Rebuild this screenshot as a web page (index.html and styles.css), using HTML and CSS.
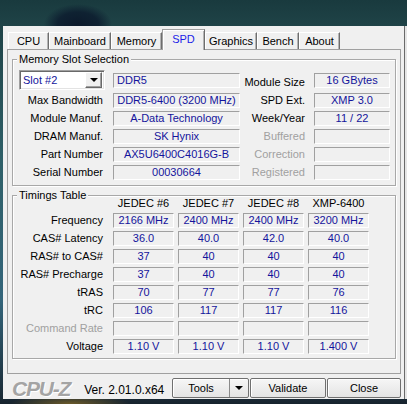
FILE: index.html
```html
<!DOCTYPE html>
<html>
<head>
<meta charset="utf-8">
<title>CPU-Z SPD</title>
<link rel="stylesheet" href="styles.css">
</head>
<body>
<div class="win">
  <div class="tabs">
    <div class="tab t-cpu">CPU</div>
    <div class="tab t-main">Mainboard</div>
    <div class="tab t-mem">Memory</div>
    <div class="tab t-spd sel">SPD</div>
    <div class="tab t-gfx">Graphics</div>
    <div class="tab t-bench">Bench</div>
    <div class="tab t-about">About</div>
  </div>
  <div class="panel">
    <div class="group g1">
      <span class="legend">Memory Slot Selection</span>
      <div class="grid1">
        <div class="combo"><span class="combo-val">Slot #2</span><span class="combo-btn"><span class="arrow"></span></span></div>
        <div class="f left mid">DDR5</div>
        <div class="rlab low">Module Size</div>
        <div class="f mid">16 GBytes</div>

        <div class="lab">Max Bandwidth</div>
        <div class="f">DDR5-6400 (3200 MHz)</div>
        <div class="rlab">SPD Ext.</div>
        <div class="f">XMP 3.0</div>

        <div class="lab">Module Manuf.</div>
        <div class="f">A-Data Technology</div>
        <div class="rlab">Week/Year</div>
        <div class="f">11 / 22</div>

        <div class="lab">DRAM Manuf.</div>
        <div class="f">SK Hynix</div>
        <div class="rlab dim">Buffered</div>
        <div class="f"></div>

        <div class="lab">Part Number</div>
        <div class="f">AX5U6400C4016G-B</div>
        <div class="rlab dim">Correction</div>
        <div class="f"></div>

        <div class="lab">Serial Number</div>
        <div class="f">00030664</div>
        <div class="rlab dim">Registered</div>
        <div class="f"></div>
      </div>
    </div>
    <div class="group g2">
      <span class="legend">Timings Table</span>
      <div class="grid2">
        <div></div>
        <div class="hd">JEDEC #6</div>
        <div class="hd">JEDEC #7</div>
        <div class="hd">JEDEC #8</div>
        <div class="hd">XMP-6400</div>

        <div class="lab2">Frequency</div>
        <div class="f">2166 MHz</div>
        <div class="f">2400 MHz</div>
        <div class="f">2400 MHz</div>
        <div class="f">3200 MHz</div>

        <div class="lab2">CAS# Latency</div>
        <div class="f">36.0</div>
        <div class="f">40.0</div>
        <div class="f">42.0</div>
        <div class="f">40.0</div>

        <div class="lab2">RAS# to CAS#</div>
        <div class="f">37</div>
        <div class="f">40</div>
        <div class="f">40</div>
        <div class="f">40</div>

        <div class="lab2">RAS# Precharge</div>
        <div class="f">37</div>
        <div class="f">40</div>
        <div class="f">40</div>
        <div class="f">40</div>

        <div class="lab2">tRAS</div>
        <div class="f">70</div>
        <div class="f">77</div>
        <div class="f">77</div>
        <div class="f">76</div>

        <div class="lab2">tRC</div>
        <div class="f">106</div>
        <div class="f">117</div>
        <div class="f">117</div>
        <div class="f">116</div>

        <div class="lab2 dim">Command Rate</div>
        <div class="f"></div>
        <div class="f"></div>
        <div class="f"></div>
        <div class="f"></div>

        <div class="lab2">Voltage</div>
        <div class="f">1.10 V</div>
        <div class="f">1.10 V</div>
        <div class="f">1.10 V</div>
        <div class="f">1.400 V</div>
      </div>
    </div>
  </div>
  <div class="foot">
    <div class="logo">CPU-Z</div>
    <div class="ver">Ver. 2.01.0.x64</div>
    <div class="btns">
      <div class="btn b-tools"><span class="btn-main">Tools</span><span class="btn-drop"><span class="arrow"></span></span></div>
      <div class="btn b-val">Validate</div>
      <div class="btn b-close">Close</div>
    </div>
  </div>
</div>
</body>
</html>
```

FILE: styles.css
```css
* { box-sizing: border-box; }

html, body { margin: 0; padding: 0; }

body {
  width: 407px;
  height: 404px;
  overflow: hidden;
  font-family: "Liberation Sans", Arial, sans-serif;
  font-size: 11px;
  color: #000;
  background:
    radial-gradient(ellipse 34px 20px at 78px 24px, #0c1a2c 0%, #0f2232 60%, rgba(15,34,50,0) 100%),
    radial-gradient(ellipse 60px 10px at 70px 404px, #6b5a2a 0%, rgba(107,90,42,0) 100%),
    linear-gradient(to bottom, #193a3e 0px, #1f4347 26px, #2f6068 160px, #34657a 300px, #1a2a36 398px, #16222c 404px);
}

.win {
  margin: 26px 0 0 3px;
  width: 404px;
  height: 373px;
  background: linear-gradient(to left, #e6e6e6 0, #e6e6e6 2px, #6a6a6a 2px, #6a6a6a 3px, #f0f0f0 3px);
}

/* ---------- tabs ---------- */
.tabs {
  display: flex;
  align-items: flex-end;
  height: 23px;
  padding-left: 5px;
}

.tab {
  height: 17px;
  line-height: 16px;
  text-align: center;
  white-space: nowrap;
  border-top: 1px solid #ffffff;
  border-left: 1px solid #ffffff;
  border-right: 1px solid #6e6e6e;
  box-shadow: inset -1px 0 0 #b4b4b4;
  background: #f0f0f0;
}

.tab.sel {
  position: relative;
  z-index: 1;
  height: 21px;
  line-height: 19px;
  margin-bottom: -1px;
  color: #1c1ce8;
  border-top: 1px solid #a0a0a0;
  border-left: 1px solid #a0a0a0;
  border-right: 1px solid #6e6e6e;
  box-shadow: inset 1px 1px 0 #ffffff, inset -1px 0 0 #b4b4b4;
}

.t-cpu { width: 41px; }
.t-main { width: 62px; }
.t-mem { width: 51px; }
.t-spd { width: 43px; }
.t-gfx { width: 52px; }
.t-bench { width: 42px; }
.t-about { width: 41px; }

/* ---------- panel ---------- */
.panel {
  margin-left: 4px;
  width: 394px;
  height: 325px;
  border: 1px solid #a0a0a0;
  padding: 9px 0 0 4px;
}

.group {
  position: relative;
  width: 384px;
  border: 1px solid #a8a8a8;
  box-shadow: inset 1px 1px 0 #ffffff, 1px 1px 0 #ffffff;
}

.g1 {
  height: 127px;
  padding: 10px 0 0 6px;
}

.g2 {
  margin-top: 9px;
  height: 164px;
  padding: 1px 0 0 6px;
}

.legend {
  position: absolute;
  top: -7px;
  left: 4px;
  padding: 0 2px;
  line-height: 13px;
  background: #f0f0f0;
  white-space: nowrap;
}

/* ---------- fields ---------- */
.f {
  height: 15px;
  line-height: 13px;
  border: 1px solid;
  border-color: #a0a0a0 #ffffff #ffffff #a0a0a0;
  text-align: center;
  color: #14149c;
  white-space: nowrap;
  overflow: hidden;
}

.f.left {
  text-align: left;
  padding-left: 3px;
}

.mid { align-self: center; }

.dim { color: #a0a0a0; }

/* ---------- memory slot grid ---------- */
.grid1 {
  display: grid;
  grid-template-columns: 94px 127px 74px 76px;
  grid-template-rows: 20px repeat(5, 15px);
  row-gap: 3px;
}

.lab {
  text-align: right;
  padding-right: 10px;
  line-height: 15px;
  white-space: nowrap;
}

.rlab {
  text-align: right;
  padding-right: 9px;
  line-height: 15px;
  white-space: nowrap;
}

.rlab.low { align-self: end; }

.combo {
  width: 86px;
  height: 20px;
  display: flex;
  align-items: center;
  justify-content: space-between;
  padding: 1px;
  background: #ffffff;
  border: 1px solid;
  border-color: #a0a0a0 #ffffff #ffffff #a0a0a0;
  box-shadow: inset 1px 1px 0 #696969, inset -1px -1px 0 #e3e3e3;
}

.combo-val {
  padding-left: 2px;
  color: #14149c;
  line-height: 15px;
}

.combo-btn {
  width: 17px;
  height: 16px;
  margin-right: 1px;
  display: flex;
  align-items: center;
  justify-content: center;
  background: #f0f0f0;
  border: 1px solid;
  border-color: #ffffff #696969 #696969 #ffffff;
  box-shadow: inset -1px -1px 0 #a0a0a0;
}

.arrow {
  width: 0;
  height: 0;
  border-left: 4px solid transparent;
  border-right: 4px solid transparent;
  border-top: 4px solid #000;
}

/* ---------- timings grid ---------- */
.grid2 {
  display: grid;
  grid-template-columns: 90px repeat(4, 61px);
  column-gap: 4px;
  grid-template-rows: 13px repeat(8, 15px);
  row-gap: 3px;
}

.hd {
  text-align: center;
  line-height: 13px;
  white-space: nowrap;
}

.lab2 {
  text-align: right;
  padding-right: 6px;
  line-height: 15px;
  white-space: nowrap;
}

/* ---------- footer ---------- */
.foot {
  display: flex;
  align-items: flex-start;
  height: 25px;
  padding-left: 9px;
  padding-right: 6px;
}

.logo {
  margin-top: 4px;
  font-size: 21px;
  line-height: 21px;
  font-weight: bold;
  font-style: italic;
  letter-spacing: -1.2px;
  color: #a4a4a4;
  text-shadow: 1px 1px 0 #ffffff;
}

.ver {
  margin-top: 9px;
  margin-left: 14px;
  font-size: 12px;
  line-height: 14px;
  white-space: nowrap;
}

.btns {
  margin-left: auto;
  margin-top: 4px;
  display: flex;
  gap: 1px;
}

.btn {
  height: 20px;
  line-height: 18px;
  text-align: center;
  border: 1px solid #707070;
  border-radius: 2px;
  background: linear-gradient(#f6f6f6, #e4e4e4);
  box-shadow: inset 1px 1px 0 #ffffff;
}

.b-tools {
  width: 77px;
  display: flex;
}

.btn-main {
  flex: 1;
}

.btn-drop {
  width: 19px;
  display: flex;
  align-items: center;
  justify-content: center;
  border-left: 1px solid #8a8a8a;
}

.b-val { width: 76px; }
.b-close { width: 74px; }
```
